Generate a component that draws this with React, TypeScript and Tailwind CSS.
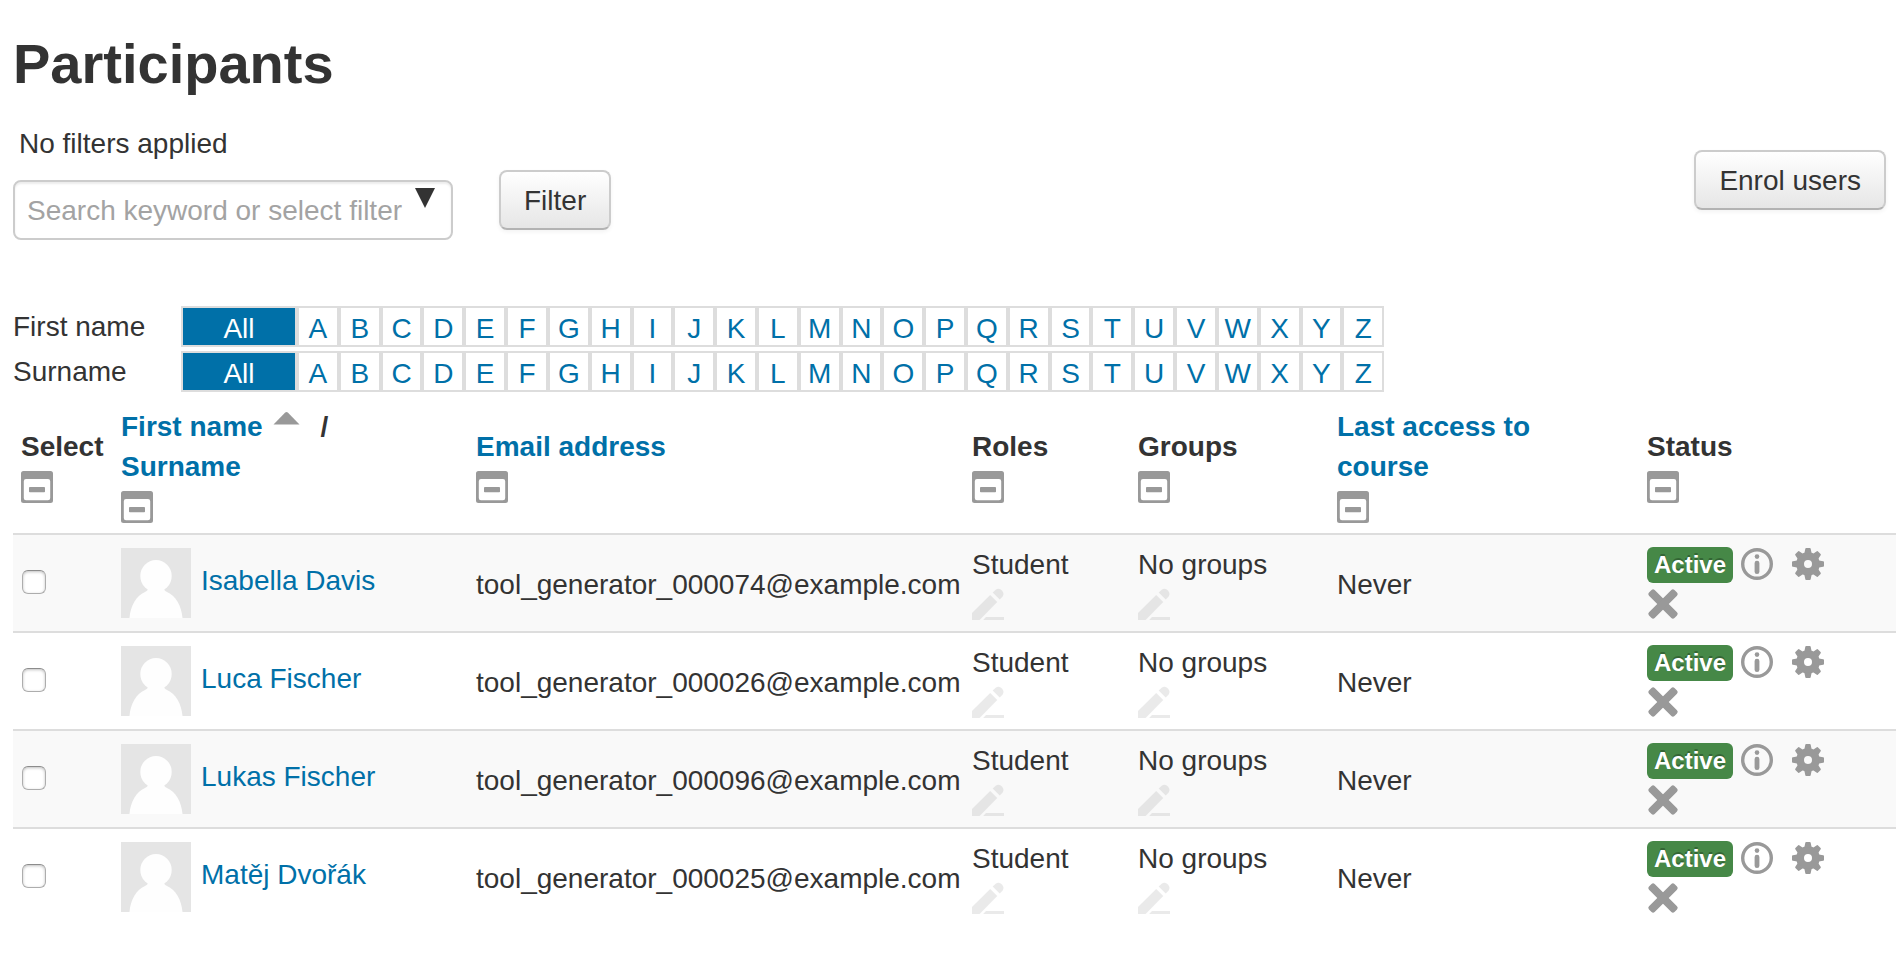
import React from "react";

type Participant = {
  name: string;
  email: string;
};

const participants: Participant[] = [
  { name: "Isabella Davis", email: "tool_generator_000074@example.com" },
  { name: "Luca Fischer", email: "tool_generator_000026@example.com" },
  { name: "Lukas Fischer", email: "tool_generator_000096@example.com" },
  { name: "Matěj Dvořák", email: "tool_generator_000025@example.com" },
];

const letters = "ABCDEFGHIJKLMNOPQRSTUVWXYZ".split("");

const buttonClass =
  "h-[60px] shrink-0 rounded-lg border-2 border-[#ccc] border-b-[#b3b3b3] bg-linear-to-b from-white to-[#e6e6e6] px-[23px] pt-[2px] leading-10 shadow-[0_2px_4px_rgba(0,0,0,0.05)]";

function MinusIcon() {
  return (
    <svg className="h-8 w-8" viewBox="0 0 32 32" fill="#999">
      <path
        fillRule="evenodd"
        d="M2.5 0h27A2.5 2.5 0 0 1 32 2.5v27a2.5 2.5 0 0 1-2.5 2.5h-27A2.5 2.5 0 0 1 0 29.500v-27A2.5 2.5 0 0 1 2.5 0zM5 8a2.2 2.2 0 0 0-2.2 2.2v16.8A2.2 2.2 0 0 0 5 29.2h22a2.2 2.2 0 0 0 2.2-2.2V10.2A2.2 2.2 0 0 0 27 8z"
      />
      <rect x="8" y="16" width="16" height="5.3" rx="0.8" />
    </svg>
  );
}

function SortIcon() {
  return (
    <svg className="h-8 w-8" viewBox="0 0 32 32" fill="#999">
      <path d="M2.5 17.500 14.2 5.500q1.300-1.100 2.600 0L28.500 17.500z" />
    </svg>
  );
}

function PencilIcon() {
  return (
    <svg className="h-8 w-8" viewBox="0 0 32 32" fill="#999">
      <path d="M0 25 18.200 7l7 7L7.600 32H0z" />
      <path d="M20.700 4.600 24 1.500a5 5 0 0 1 6.700 6.900l-3 3z" />
      <path d="M14 29h18v3H11.200z" />
    </svg>
  );
}

function InfoIcon() {
  return (
    <svg className="h-8 w-8" viewBox="0 0 32 32" fill="#999">
      <circle cx="16" cy="16" r="14.300" fill="none" stroke="#999" strokeWidth="3.400" />
      <circle cx="16" cy="8.600" r="2.300" />
      <rect x="13.600" y="12.700" width="4.800" height="13.300" rx="2.300" />
    </svg>
  );
}

function GearIcon() {
  return (
    <svg className="h-8 w-8" viewBox="0 0 32 32" fill="#999">
      <circle cx="16" cy="16" r="7.900" fill="none" stroke="#999" strokeWidth="7.800" />
      {[0, 45, 90, 135, 180, 225, 270, 315].map((angle) => (
        <path
          key={angle}
          d="M14.200 0h3.600q.8 0 .9.800l.9 4.400H12.400l.9-4.400q.1-.8.9-.8z"
          transform={`rotate(${angle} 16 16)`}
        />
      ))}
    </svg>
  );
}

function CrossIcon() {
  return (
    <svg className="h-8 w-8" viewBox="0 0 32 32" fill="#999">
      <rect x="-2" y="12" width="36" height="8" rx="2.200" transform="rotate(45 16 16)" />
      <rect x="-2" y="12" width="36" height="8" rx="2.200" transform="rotate(-45 16 16)" />
    </svg>
  );
}

function Avatar() {
  return (
    <svg className="h-[70px] w-[70px] shrink-0" viewBox="0 0 70 70">
      <rect width="70" height="70" fill="#e5e5e5" />
      <g fill="#fefefe">
        <ellipse cx="35" cy="28" rx="15.700" ry="16" />
        <path d="M27 40h16c0 2 1 3 3 4 9 4 14.500 14 15.500 26h-53C9.500 58 15 48 24 44c2-1 3-2 3-4z" />
      </g>
    </svg>
  );
}

function InitialsBar({ label }: { label: string }) {
  return (
    <div className="flex h-[41px] leading-[42px]">
      <span className="w-[168px]">{label}</span>
      <nav aria-label={label} className="flex w-[1203px] text-center text-[#0070a8]">
        <a href="#all" className="w-[116px] border-2 border-[#ddd] bg-[#0070a8] text-white">
          All
        </a>
        {letters.map((letter) => (
          <a key={letter} href={`#${letter}`} className="flex-1 border-2 border-[#ddd]">
            {letter}
          </a>
        ))}
      </nav>
    </div>
  );
}

function HeaderCell({ children }: { children: React.ReactNode }) {
  return (
    <th className="px-2 pt-[9px] pb-[7px] text-left align-middle font-bold">
      <div>{children}</div>
      <button aria-label="Hide column" className="mt-[4px] mb-[3px] block">
        <MinusIcon />
      </button>
    </th>
  );
}

function ParticipantRow({ user }: { user: Participant }) {
  const cell = "border-t-2 border-[#ddd] px-2 pt-[10px] pb-[6px]";

  return (
    <tr className="odd:bg-[#f9f9f9]">
      <td className="border-t-2 border-[#ddd] px-[9px] pb-[2px]">
        <input
          type="checkbox"
          aria-label={`Select ${user.name}`}
          className="block h-6 w-6 appearance-none rounded-[6px] border border-[#adadad] border-t-[#8c8c8c] bg-white shadow-[inset_0_1px_3px_rgba(0,0,0,0.25)]"
        />
      </td>
      <td className="border-t-2 border-[#ddd] px-2">
        <a href="#profile" className="flex items-center gap-[10px] text-[#0070a8]">
          <Avatar />
          <span className="pb-[4px]">{user.name}</span>
        </a>
      </td>
      <td className={cell}>{user.email}</td>
      <td className={cell}>
        <div>Student</div>
        <button aria-label="Edit roles" className="flex h-10 items-center pb-[2px] opacity-20">
          <PencilIcon />
        </button>
      </td>
      <td className={cell}>
        <div>No groups</div>
        <button aria-label="Edit groups" className="flex h-10 items-center pb-[2px] opacity-20">
          <PencilIcon />
        </button>
      </td>
      <td className={cell}>Never</td>
      <td className={cell}>
        <div className="flex h-10 items-center">
          <span className="rounded-[6px] bg-[#468847] px-[7px] text-[24px] leading-9 font-bold text-white [text-shadow:0_-2px_0_rgba(0,0,0,0.25)]">
            Active
          </span>
          <button aria-label="Enrolment details" className="ml-2 pb-[2px]">
            <InfoIcon />
          </button>
          <button aria-label="Edit enrolment" className="ml-[19px] pb-[2px]">
            <GearIcon />
          </button>
        </div>
        <button aria-label="Unenrol" className="flex h-10 items-center pb-[2px]">
          <CrossIcon />
        </button>
      </td>
    </tr>
  );
}

export default function App() {
  return (
    <div className="min-h-screen bg-white pt-6 pr-2 pl-[13px] font-['Liberation_Sans',Arial,sans-serif] text-[28px] leading-10 text-[#333]">
      <h2 className="text-[56px] leading-20 font-bold">Participants</h2>

      {/* Filter and enrol */}
      <div className="mt-5 flex items-start justify-between pr-[10px]">
        <div>
          <p className="pl-[6px]">No filters applied</p>
          <form className="mt-[6px] flex items-start gap-[46px]">
            <div className="relative mt-[10px]">
              <input
                type="text"
                aria-label="Search keyword or select filter"
                placeholder="Search keyword or select filter"
                className="block h-[60px] w-[440px] rounded-lg border-2 border-[#ccc] bg-white pt-[2px] pl-3 shadow-[inset_0_2px_2px_rgba(0,0,0,0.075)] placeholder:text-[#a3a3a3]"
              />
              <svg className="absolute top-2 right-[18px] h-5 w-5" viewBox="0 0 20 20" fill="#333">
                <path d="M0 0h20L10 20z" />
              </svg>
            </div>
            <button type="button" className={buttonClass}>
              Filter
            </button>
          </form>
        </div>
        <button type="button" className={`mt-[26px] ${buttonClass}`}>
          Enrol users
        </button>
      </div>

      {/* Initials */}
      <div className="mt-[66px] flex flex-col gap-1">
        <InitialsBar label="First name" />
        <InitialsBar label="Surname" />
      </div>

      <table className="mt-[6px] w-full table-fixed border-separate border-spacing-0">
        <colgroup>
          <col className="w-[100px]" />
          <col className="w-[355px]" />
          <col className="w-[496px]" />
          <col className="w-[166px]" />
          <col className="w-[199px]" />
          <col className="w-[310px]" />
          <col />
        </colgroup>
        <thead>
          <tr>
            <HeaderCell>Select</HeaderCell>
            <HeaderCell>
              <div className="flex h-10">
                <a href="#firstname" className="text-[#0070a8]">
                  First name
                </a>
                <span className="ml-2">
                  <SortIcon />
                </span>
                <span className="ml-[18px]">/</span>
              </div>
              <a href="#surname" className="block text-[#0070a8]">
                Surname
              </a>
            </HeaderCell>
            <HeaderCell>
              <a href="#email" className="text-[#0070a8]">
                Email address
              </a>
            </HeaderCell>
            <HeaderCell>Roles</HeaderCell>
            <HeaderCell>Groups</HeaderCell>
            <HeaderCell>
              <a href="#lastaccess" className="text-[#0070a8]">
                Last access to
                <br />
                course
              </a>
            </HeaderCell>
            <HeaderCell>Status</HeaderCell>
          </tr>
        </thead>
        <tbody>
          {participants.map((user) => (
            <ParticipantRow key={user.email} user={user} />
          ))}
        </tbody>
      </table>
    </div>
  );
}
